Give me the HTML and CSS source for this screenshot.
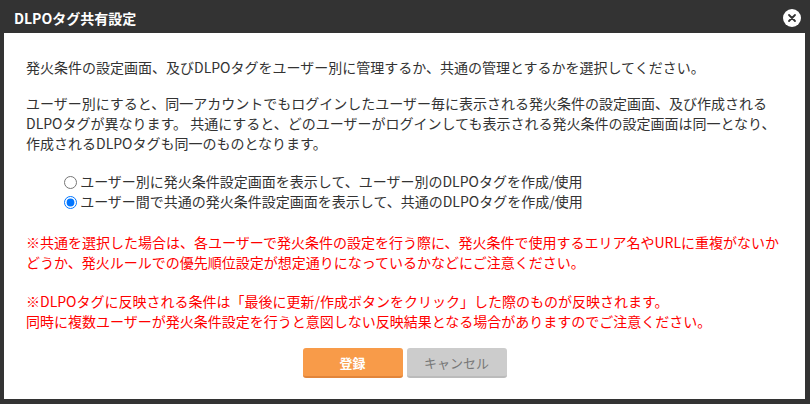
FILE: index.html
```html
<!DOCTYPE html>
<html lang="ja">
<head>
  <meta charset="UTF-8" />
  <title>DLPOタグ共有設定</title>
  <link rel="stylesheet" href="styles.css">
</head>
<body>
  <div class="dialog">
    <div class="dialog-title">
      <span>DLPOタグ共有設定</span>
      <button class="close" type="button" aria-label="閉じる">
        <svg width="18" height="18" viewBox="0 0 18 18">
          <circle cx="9" cy="9" r="9" fill="#fff"/>
          <path d="M6 6 L12 12 M12 6 L6 12" stroke="#333" stroke-width="1.8" stroke-linecap="round"/>
        </svg>
      </button>
    </div>
    <div class="dialog-body">
      <p class="lead">発火条件の設定画面、及びDLPOタグをユーザー別に管理するか、共通の管理とするかを選択してください。</p>
      <p class="desc">ユーザー別にすると、同一アカウントでもログインしたユーザー毎に表示される発火条件の設定画面、及び作成される<br>DLPOタグが異なります。 共通にすると、どのユーザーがログインしても表示される発火条件の設定画面は同一となり、<br>作成されるDLPOタグも同一のものとなります。</p>

      <div class="choices">
        <label><input type="radio" name="share" value="user"> ユーザー別に発火条件設定画面を表示して、ユーザー別のDLPOタグを作成/使用</label>
        <label><input type="radio" name="share" value="common" checked> ユーザー間で共通の発火条件設定画面を表示して、共通のDLPOタグを作成/使用</label>
      </div>

      <p class="note note-first">※共通を選択した場合は、各ユーザーで発火条件の設定を行う際に、発火条件で使用するエリア名やURLに重複がないか<br>どうか、発火ルールでの優先順位設定が想定通りになっているかなどにご注意ください。</p>
      <p class="note">※DLPOタグに反映される条件は「最後に更新/作成ボタンをクリック」した際のものが反映されます。<br>同時に複数ユーザーが発火条件設定を行うと意図しない反映結果となる場合がありますのでご注意ください。</p>

      <div class="actions">
        <button class="btn btn-save" type="button">登録</button>
        <button class="btn btn-cancel" type="button">キャンセル</button>
      </div>
    </div>
  </div>
</body>
</html>
```

FILE: styles.css
```css
body {
  margin: 0;
  background: #333;
  font-family: "Noto Sans CJK JP", "Noto Sans", sans-serif;
  color: #333;
}

.dialog {
  width: 810px;
  height: 404px;
  padding: 0 5px 5px 4px;
  box-sizing: border-box;
  display: flex;
  flex-direction: column;
}

.dialog-title {
  height: 33px;
  display: flex;
  align-items: center;
  justify-content: space-between;
  padding: 2px 4px 0 10px;
  box-sizing: border-box;
  color: #fff;
  font-size: 14px;
  font-weight: bold;
}

.close {
  border: none;
  background: none;
  padding: 0;
  width: 18px;
  height: 18px;
  cursor: pointer;
  display: flex;
}

.dialog-body {
  flex: 1;
  background: #fff;
  padding: 24px 22px 0 22px;
  font-size: 14px;
  line-height: 20px;
}

p {
  margin: 0;
}

.desc {
  margin-top: 16px;
}

.choices {
  margin: 19px 0 0 38px;
}

.choices label {
  display: block;
  height: 19.5px;
  line-height: 19.5px;
}

.choices input {
  width: 13px;
  height: 13px;
  margin: 0;
  vertical-align: -2px;
}

.note {
  color: #f00;
  margin-top: 19px;
}

.note-first {
  margin-top: 21px;
}

.actions {
  display: flex;
  justify-content: center;
  gap: 4px;
  margin-top: 17px;
}

.btn {
  width: 100px;
  height: 30px;
  border: none;
  border-radius: 3px;
  font-family: inherit;
  font-size: 13px;
  cursor: pointer;
}

.btn-save {
  background: #f89b49;
  border-bottom: 2px solid #e2853a;
  color: #fff;
  font-weight: bold;
}

.btn-cancel {
  background: #ccc;
  border-bottom: 2px solid #bbb;
  color: #777;
}
```
